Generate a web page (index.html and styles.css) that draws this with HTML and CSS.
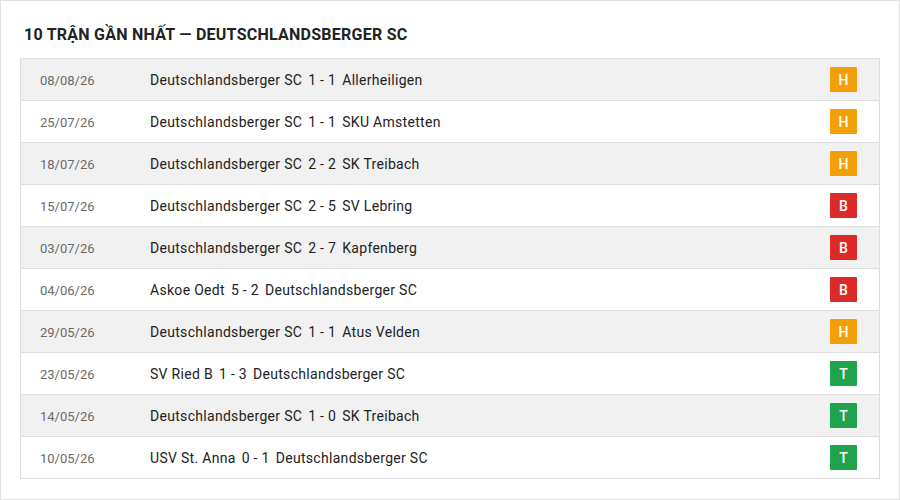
FILE: index.html
```html
<!DOCTYPE html>
<html>
<head>
<meta charset="utf-8">
<link rel="stylesheet" href="styles.css">
</head>
<body>
<div class="panel">
  <h2 class="title">10 TRẬN GẦN NHẤT — DEUTSCHLANDSBERGER SC</h2>
  <div class="list">
    <div class="row"><span class="date">08/08/26</span><span class="match">Deutschlandsberger SC<span class="score">1 - 1</span>Allerheiligen</span><span class="badge h">H</span></div>
    <div class="row"><span class="date">25/07/26</span><span class="match">Deutschlandsberger SC<span class="score">1 - 1</span>SKU Amstetten</span><span class="badge h">H</span></div>
    <div class="row"><span class="date">18/07/26</span><span class="match">Deutschlandsberger SC<span class="score">2 - 2</span>SK Treibach</span><span class="badge h">H</span></div>
    <div class="row"><span class="date">15/07/26</span><span class="match">Deutschlandsberger SC<span class="score">2 - 5</span>SV Lebring</span><span class="badge b">B</span></div>
    <div class="row"><span class="date">03/07/26</span><span class="match">Deutschlandsberger SC<span class="score">2 - 7</span>Kapfenberg</span><span class="badge b">B</span></div>
    <div class="row"><span class="date">04/06/26</span><span class="match">Askoe Oedt<span class="score">5 - 2</span>Deutschlandsberger SC</span><span class="badge b">B</span></div>
    <div class="row"><span class="date">29/05/26</span><span class="match">Deutschlandsberger SC<span class="score">1 - 1</span>Atus Velden</span><span class="badge h">H</span></div>
    <div class="row"><span class="date">23/05/26</span><span class="match">SV Ried B<span class="score">1 - 3</span>Deutschlandsberger SC</span><span class="badge t">T</span></div>
    <div class="row"><span class="date">14/05/26</span><span class="match">Deutschlandsberger SC<span class="score">1 - 0</span>SK Treibach</span><span class="badge t">T</span></div>
    <div class="row"><span class="date">10/05/26</span><span class="match">USV St. Anna<span class="score">0 - 1</span>Deutschlandsberger SC</span><span class="badge t">T</span></div>
  </div>
</div>
</body>
</html>
```

FILE: styles.css
```css
* { box-sizing: border-box; }
html, body { margin: 0; padding: 0; background: #fff; }
body { font-family: Roboto, "Liberation Sans", sans-serif; }
.panel {
  width: 900px;
  height: 500px;
  border: 1px solid #e0e0e0;
  padding: 19px 19px 0 19px;
}
.title {
  margin: 0 0 0 4px;
  height: 38px;
  padding-top: 4px;
  font-size: 16px;
  font-weight: 700;
  color: #222;
  line-height: 22px;
  letter-spacing: 0.25px;
}
.list {
  border: 1px solid #ddd;
  border-bottom: none;
}
.row {
  display: flex;
  align-items: center;
  height: 42px;
  border-bottom: 1px solid #ddd;
  padding: 1px 22px 0 19px;
  background: #fff;
}
.row:nth-child(odd) { background: #f1f1f1; }
.date {
  width: 110px;
  font-size: 13px;
  color: #6a6a6a;
}
.match {
  flex: 1;
  font-size: 14px;
  color: #222;
  letter-spacing: 0.3px;
}
.score { margin: 0 6px; }
.badge {
  width: 27px;
  height: 25px;
  margin-top: -1px;
  display: flex;
  align-items: center;
  justify-content: center;
  color: #fff;
  font-size: 14px;
  font-weight: 500;
  border-radius: 1px;
  letter-spacing: 0;
}
.badge.h { background: #f29f0a; }
.badge.b { background: #dc2a2a; }
.badge.t { background: #1fa34c; }
```
